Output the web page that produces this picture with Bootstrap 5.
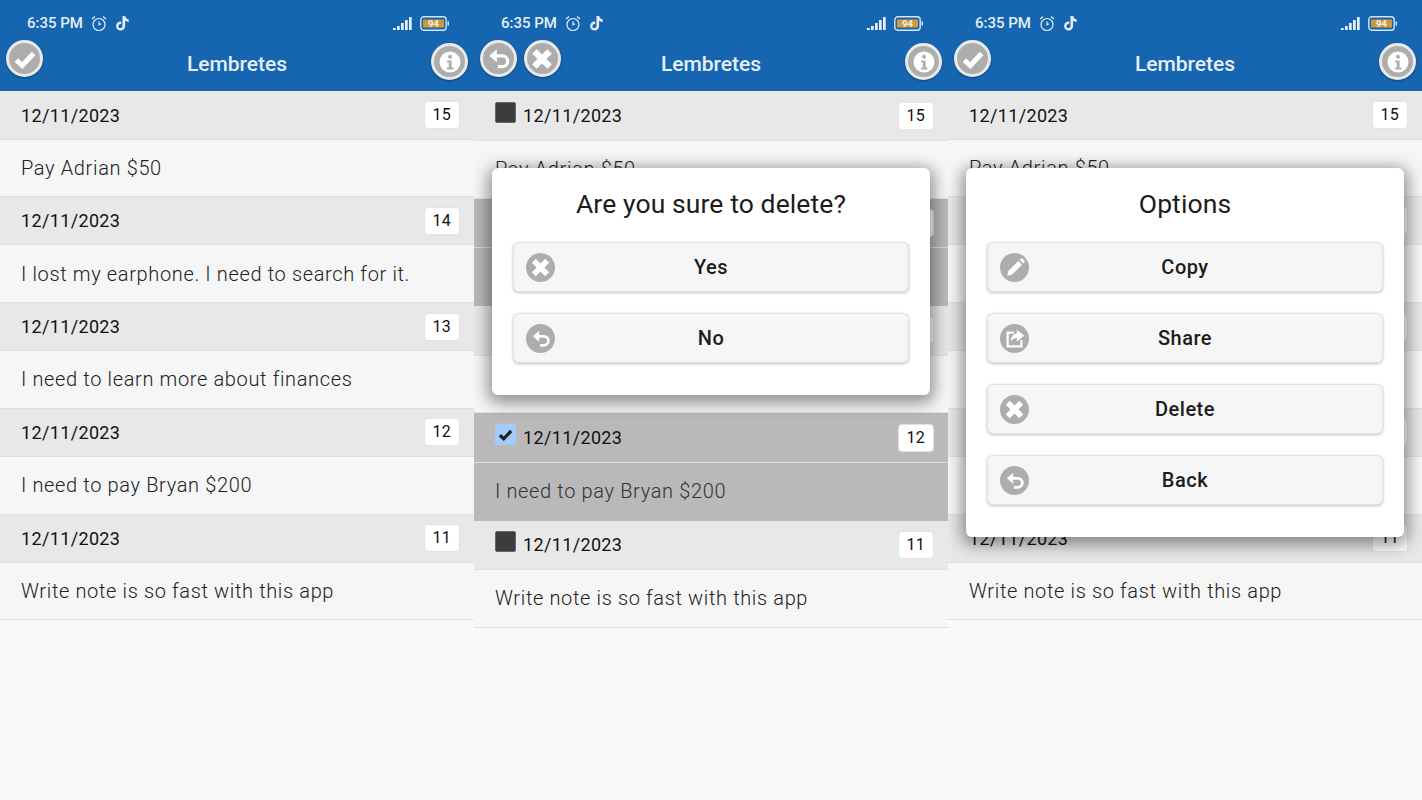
<!DOCTYPE html>
<html lang="pt">
<head>
    <meta charset="UTF-8">
    <meta name="viewport" content="width=device-width, initial-scale=1.0">
    <title>Lembretes</title>
    <link href="https://cdn.jsdelivr.net/npm/bootstrap@5.3.3/dist/css/bootstrap.min.css" rel="stylesheet">
    <style>
        body {
            margin: 0;
            background: #fafafa;
            font-family: Roboto, "Liberation Sans", sans-serif;
            color: #212121;
            overflow: hidden;
        }
        .phone {
            height: 800px;
            background: #fafafa;
            overflow: hidden;
        }
        .app-head {
            height: 91px;
            background: #1565b0;
            color: #e6eef7;
        }
        .status-line {
            height: 40px;
            padding: 6px 24px 0 27px;
            font-size: 15px;
            font-weight: 500;
            line-height: 18px;
        }
        .status-line svg { display: block; }
        .tool-line {
            height: 51px;
            padding: 0 6px;
        }
        .round-btn {
            width: 37px;
            height: 37px;
            flex: none;
            border-radius: 50%;
            background: #adadad;
            border: 3px solid #e9e9e9;
            box-shadow: 0 1px 2px rgba(0, 0, 0, .35);
            display: flex;
            align-items: center;
            justify-content: center;
        }
        .round-btn.lower { margin-top: 3px; }
        .head-title {
            left: 0;
            right: 0;
            top: 51.5px;
            font-size: 21px;
            font-weight: 500;
            line-height: 24px;
            text-align: center;
        }
        .note-list {
            padding-top: .5px;
            background: #e8e8e8;
        }
        .date-line {
            height: 48px;
            padding: 0 14px 0 21px;
            background: #e8e8e8;
            border-bottom: 1px solid #e0e0e0;
            font-size: 18px;
            letter-spacing: .35px;
            color: #111;
        }
        .with-boxes .date-line { height: 49.5px; }
        .note-line {
            height: 57.75px;
            padding: 0 21px;
            background: #f6f6f6;
            border-bottom: 1px solid #e0e0e0;
            font-size: 20px;
            font-weight: 300;
            letter-spacing: .64px;
            color: #212121;
        }
        .picked .date-line { background: #b9b9b9; border-bottom-color: #dcdcdc; }
        .picked .note-line { background: #b9b9b9; border-bottom-color: #b9b9b9; color: #333; }
        .num-tag {
            width: 36.5px;
            height: 28px;
            background: #fff;
            border: 1px solid #e2e2e2;
            border-radius: 4px;
            font-size: 16px;
            letter-spacing: .3px;
            line-height: 26px;
            text-align: center;
        }
        .tick-box {
            width: 21px;
            height: 21px;
            flex: none;
            margin: -7px 7px 0 0;
            border-radius: 2px;
            background: #3c3c3c;
            border: 1px solid #666;
        }
        .tick-box.on {
            background: #a3cbfb;
            border-color: #a3cbfb;
            display: flex;
            align-items: center;
            justify-content: center;
        }
        .sheet {
            left: 17.5px;
            top: 168px;
            width: 438.5px;
            padding: 0 21px 32px 21.5px;
            background: #fff;
            border: 0;
            border-radius: 6px;
            box-shadow: 0 4px 16px 4px rgba(0, 0, 0, .42);
        }
        .sheet-title {
            height: 74px;
            padding-top: 19px;
            font-size: 26.5px;
            font-weight: 400;
            line-height: 33px;
            letter-spacing: .1px;
            text-align: center;
            color: #1c1c1c;
        }
        .sheet-btn {
            width: 100%;
            height: 50px;
            margin-bottom: 21px;
            padding: 0;
            background: #f6f6f6;
            border: 1px solid #e2e2e2;
            border-radius: 6px;
            box-shadow: 0 1px 3px rgba(0, 0, 0, .25);
            font-size: 20px;
            font-weight: 500;
            letter-spacing: .5px;
            color: #1c1c1c;
        }
        .sheet-btn:last-child { margin-bottom: 0; }
        .sheet-btn .btn-ico {
            left: 12px;
            top: 10px;
            width: 29px;
            height: 29px;
            border-radius: 50%;
            background: #adadad;
            display: flex;
            align-items: center;
            justify-content: center;
        }
    </style>
</head>
<body>
    <svg width="0" height="0" class="position-absolute">
        <symbol id="ic-check" viewBox="0 0 24 24"><path d="M4 13l5.500 5L20 7" fill="none" stroke="currentColor" stroke-width="4.600"/></symbol>
        <symbol id="ic-x" viewBox="0 0 24 24"><path d="M5 5l14 14M19 5L5 19" fill="none" stroke="currentColor" stroke-width="5.800"/></symbol>
        <symbol id="ic-back" viewBox="0 0 24 24"><path d="M7 9h8a5 5 0 0 1 0 10h-4" fill="none" stroke="currentColor" stroke-width="3"/><path d="M10 3v12L3 9z" fill="currentColor"/></symbol>
        <symbol id="ic-info" viewBox="0 0 24 24"><circle cx="12" cy="12" r="10.500" fill="currentColor"/><circle cx="12" cy="6.800" r="2" fill="#adadad"/><path d="M9 10.500h4.600v7H15.400v2H9v-2h1.800v-5H9z" fill="#adadad"/></symbol>
        <symbol id="ic-pencil" viewBox="0 0 24 24"><path d="M3.500 20.500l1.200-5.200L15.600 4.400l4 4L8.700 19.300zM17 3l1.300-1.200a1.500 1.500 0 0 1 2 0l1.900 1.900a1.500 1.500 0 0 1 0 2L21 7z" fill="currentColor"/></symbol>
        <symbol id="ic-share" viewBox="0 0 24 24"><path d="M11 5H4v15h15v-7" fill="none" stroke="currentColor" stroke-width="2.400"/><path d="M14 2l8 6.500-8 6.500v-4c-3.500 0-5.500 1.500-6.500 4 0-5 2.500-8.500 6.500-9z" fill="currentColor"/></symbol>
    </svg>

    <div class="row g-0">
        <div class="col-4"><div class="phone position-relative" id="pane-list"></div></div>
        <div class="col-4"><div class="phone position-relative with-boxes" id="pane-delete"></div></div>
        <div class="col-4"><div class="phone position-relative" id="pane-options"></div></div>
    </div>

    <script src="https://cdn.jsdelivr.net/npm/bootstrap@5.3.3/dist/js/bootstrap.bundle.min.js"></script>
    <script>
        const notes = [
            { num: 15, text: 'Pay Adrian $50' },
            { num: 14, text: 'I lost my earphone. I need to search for it.' },
            { num: 13, text: 'I need to learn more about finances' },
            { num: 12, text: 'I need to pay Bryan $200' },
            { num: 11, text: 'Write note is so fast with this app' }
        ];

        function icon(name, size) {
            return `<svg width="${size}" height="${size}"><use href="#ic-${name}"/></svg>`;
        }

        function statusBar() {
            return `
                <div class="status-line d-flex align-items-center">
                    <span>6:35 PM</span>
                    <svg class="ms-2" width="16" height="17" viewBox="0 0 16 17" fill="none" stroke="currentColor" stroke-width="1.200">
                        <circle cx="8" cy="9.500" r="6"/><path d="M8 6.500v3.300l2 -1M1 4l3-2.500M15 4l-3-2.500"/>
                    </svg>
                    <svg class="ms-2" width="15" height="16" viewBox="0 0 15 16" fill="currentColor">
                        <path d="M7.500 1h2.600c.3 2 1.700 3.200 3.600 3.400v2.500c-1.400 0-2.600-.5-3.600-1.200v5.300a4.500 4.500 0 1 1-4.500-4.500h.6v2.700a2 2 0 1 0 1.300 1.800z"/>
                    </svg>
                    <svg class="ms-auto" width="19" height="13" viewBox="0 0 19 13" fill="currentColor">
                        <rect x="0" y="11" width="2.700" height="2"/><rect x="4" y="9" width="2.700" height="4"/><rect x="8" y="6" width="2.700" height="7"/><rect x="12" y="3" width="2.700" height="10"/><rect x="16" y="0" width="2.700" height="13"/>
                    </svg>
                    <svg class="ms-2" width="30" height="15" viewBox="0 0 30 15">
                        <rect x=".8" y=".8" width="25.400" height="13.400" rx="3" fill="none" stroke="#d5e3f3" stroke-width="1.400"/>
                        <rect x="3" y="3.500" width="21" height="8" fill="#cf9a3c"/>
                        <rect x="27.500" y="5.500" width="1.500" height="4" fill="#d5e3f3"/>
                        <text x="13.500" y="10.800" font-size="9.500" font-weight="700" text-anchor="middle" fill="#f5efe0" font-family="Roboto, sans-serif">94</text>
                    </svg>
                </div>`;
        }

        function appHeader(leftIcons) {
            const left = leftIcons.map(name => `<div class="round-btn">${icon(name, 26)}</div>`).join('');
            return `
                <div class="app-head position-relative">
                    ${statusBar()}
                    <div class="tool-line d-flex align-items-start">
                        <div class="d-flex text-white" style="gap:6.5px">${left}</div>
                        <div class="round-btn lower ms-auto text-white">${icon('info', 24)}</div>
                    </div>
                    <div class="head-title position-absolute">Lembretes</div>
                </div>`;
        }

        // boxes: lista com checkbox; picked: numeros selecionados
        function noteRows(boxes, picked) {
            const rows = notes.map(n => {
                const isPicked = picked.includes(n.num);
                let box = '';
                if (boxes) {
                    box = isPicked
                        ? `<span class="tick-box on" style="color:#222">${icon('check', 17)}</span>`
                        : '<span class="tick-box"></span>';
                }
                return `
                    <div class="${isPicked ? 'picked' : ''}">
                        <div class="date-line d-flex align-items-center">
                            ${box}<span>12/11/2023</span>
                            <span class="num-tag ms-auto">${n.num}</span>
                        </div>
                        <div class="note-line d-flex align-items-center">${n.text}</div>
                    </div>`;
            }).join('');
            return `<div class="note-list">${rows}</div>`;
        }

        function sheet(title, buttons) {
            const btns = buttons.map(b => `
                <button type="button" class="btn sheet-btn d-block position-relative">
                    <span class="btn-ico position-absolute text-white">${icon(b.icon, b.icon === 'x' ? 23 : 22)}</span>${b.label}
                </button>`).join('');
            return `
                <div class="card sheet position-absolute">
                    <div class="sheet-title">${title}</div>
                    ${btns}
                </div>`;
        }

        document.getElementById('pane-list').innerHTML =
            appHeader(['check']) + noteRows(false, []);

        document.getElementById('pane-delete').innerHTML =
            appHeader(['back', 'x']) + noteRows(true, [14, 12]) +
            sheet('Are you sure to delete?', [
                { icon: 'x', label: 'Yes' },
                { icon: 'back', label: 'No' }
            ]);

        document.getElementById('pane-options').innerHTML =
            appHeader(['check']) + noteRows(false, []) +
            sheet('Options', [
                { icon: 'pencil', label: 'Copy' },
                { icon: 'share', label: 'Share' },
                { icon: 'x', label: 'Delete' },
                { icon: 'back', label: 'Back' }
            ]);
    </script>
</body>
</html>
